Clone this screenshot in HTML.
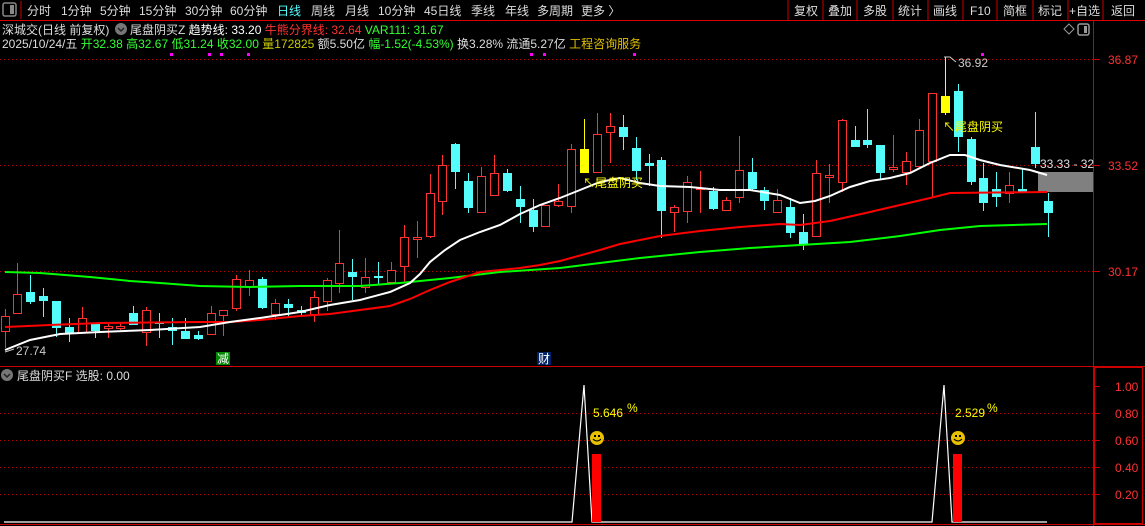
<!DOCTYPE html>
<html><head><meta charset="utf-8"><style>
html,body{margin:0;padding:0;background:#000;width:1145px;height:526px;overflow:hidden}
svg{display:block}
text{font-family:"Liberation Sans","Noto Sans CJK SC",sans-serif;font-size:12px}
</style></head><body>
<svg id="s" width="1145" height="526" xmlns="http://www.w3.org/2000/svg">
<rect width="1145" height="526" fill="#000"/>
<!-- toolbar -->
<rect x="3" y="3" width="13" height="13" fill="none" stroke="#888" stroke-width="1.5" rx="2"/>
<rect x="10" y="5" width="4" height="9" fill="#888"/>
<line x1="21" y1="1" x2="21" y2="19" stroke="#c00"/>
<g fill="#ddd">
<text x="27" y="15">分时</text><text x="61" y="15">1分钟</text><text x="100" y="15">5分钟</text>
<text x="139" y="15">15分钟</text><text x="185" y="15">30分钟</text><text x="230" y="15">60分钟</text>
<text x="277" y="15" fill="#54fcfc">日线</text><text x="311" y="15">周线</text><text x="345" y="15">月线</text>
<text x="378" y="15">10分钟</text><text x="424" y="15">45日线</text><text x="471" y="15">季线</text>
<text x="505" y="15">年线</text><text x="537" y="15">多周期</text><text x="581" y="15">更多 〉</text>
<text x="794" y="15">复权</text><text x="828" y="15">叠加</text><text x="863" y="15">多股</text><text x="898" y="15">统计</text>
<text x="933" y="15">画线</text><text x="970" y="15">F10</text><text x="1003" y="15">简框</text><text x="1038" y="15">标记</text>
<text x="1069" y="15">+自选</text><text x="1111" y="15">返回</text>
</g>
<g stroke="#c00"><line x1="788" y1="0" x2="788" y2="20"/><line x1="823" y1="0" x2="823" y2="20"/><line x1="857" y1="0" x2="857" y2="20"/><line x1="893" y1="0" x2="893" y2="20"/><line x1="928" y1="0" x2="928" y2="20"/><line x1="963" y1="0" x2="963" y2="20"/><line x1="997" y1="0" x2="997" y2="20"/><line x1="1033" y1="0" x2="1033" y2="20"/><line x1="1068" y1="0" x2="1068" y2="20"/><line x1="1103" y1="0" x2="1103" y2="20"/></g>
<line x1="0" y1="20.5" x2="1145" y2="20.5" stroke="#d00"/>
<!-- header rows -->
<text x="2" y="34" fill="#ddd">深城交(日线 前复权)</text>
<circle cx="121" cy="29" r="6" fill="#777"/><path d="M118 28l3 3 3-3" stroke="#222" fill="none" stroke-width="1.5"/>
<text x="130" y="34" fill="#ddd">尾盘阴买Z <tspan fill="#fff">趋势线: 33.20</tspan> <tspan fill="#ff3232">牛熊分界线: 32.64</tspan> <tspan fill="#32ff32">VAR111: 31.67</tspan></text>
<text x="2" y="48" fill="#ddd">2025/10/24/五 <tspan fill="#32ff32">开32.38</tspan> <tspan fill="#32ff32">高32.67</tspan> <tspan fill="#32ff32">低31.24</tspan> <tspan fill="#32ff32">收32.00</tspan> <tspan fill="#c8c800">量172825</tspan> 额5.50亿 <tspan fill="#32ff32">幅-1.52(-4.53%)</tspan> 换3.28% 流通5.27亿 <tspan fill="#e0c000">工程咨询服务</tspan></text>
<path d="M1064 29l5-5 5 5-5 5z" fill="none" stroke="#999"/>
<rect x="1078" y="24" width="11" height="11" fill="none" stroke="#999" stroke-width="1.5" rx="2"/><rect x="1084" y="26" width="3" height="7" fill="#999"/>
<!-- grid -->
<g stroke="#b00" stroke-dasharray="1,3">
<line x1="0" y1="59.5" x2="1093" y2="59.5"/><line x1="0" y1="165.5" x2="1093" y2="165.5"/><line x1="0" y1="271.5" x2="1093" y2="271.5"/>
<line x1="0" y1="413.5" x2="1093" y2="413.5"/><line x1="0" y1="440.5" x2="1093" y2="440.5"/><line x1="0" y1="467.5" x2="1093" y2="467.5"/><line x1="0" y1="494.5" x2="1093" y2="494.5"/>
</g>
<line x1="1093.5" y1="20" x2="1093.5" y2="526" stroke="#c00"/>
<line x1="0" y1="366.5" x2="1145" y2="366.5" stroke="#c00"/>
<rect x="1094.5" y="367.5" width="48" height="156" fill="none" stroke="#c00"/>
<line x1="0" y1="524.5" x2="1145" y2="524.5" stroke="#c00"/>
<g stroke="#c00"><line x1="1094" y1="59.5" x2="1100" y2="59.5"/><line x1="1094" y1="165.5" x2="1100" y2="165.5"/><line x1="1094" y1="271.5" x2="1100" y2="271.5"/>
<line x1="1094" y1="386.5" x2="1100" y2="386.5"/><line x1="1094" y1="413.5" x2="1100" y2="413.5"/><line x1="1094" y1="440.5" x2="1100" y2="440.5"/><line x1="1094" y1="467.5" x2="1100" y2="467.5"/><line x1="1094" y1="494.5" x2="1100" y2="494.5"/></g>
<g fill="#ff3232"><text x="1108" y="64">36.87</text><text x="1108" y="170">33.52</text><text x="1108" y="276">30.17</text>
<text x="1115" y="391">1.00</text><text x="1115" y="418">0.80</text><text x="1115" y="445">0.60</text><text x="1115" y="472">0.40</text><text x="1115" y="499">0.20</text></g>
<g fill="#f0f"><rect x="170" y="53" width="3" height="3"/><rect x="208" y="53" width="3" height="3"/><rect x="220" y="53" width="3" height="3"/><rect x="247" y="53" width="3" height="3"/><rect x="530" y="53" width="3" height="3"/><rect x="543" y="53" width="3" height="3"/><rect x="633" y="53" width="3" height="3"/><rect x="981" y="53" width="3" height="3"/></g>
<rect x="1038" y="172" width="55" height="20" fill="#808080"/>
<g id="c"></g>
<polyline fill="none" stroke="#00ff00" stroke-width="2" points="5,272 40,273 90,277 130,281 160,283 200,286 250,287 300,286 360,286 400,283 450,278 500,272 560,268 600,263 640,258 700,252 750,248 800,245 850,242 900,236 940,230 980,226 1047,224"/>
<polyline fill="none" stroke="#ff0000" stroke-width="2" points="5,327 50,325 100,323 200,322 230,322 260,320 300,316 330,314 360,310 390,306 410,299 430,290 450,282 480,272 520,268 540,265 560,261 600,250 620,244 660,236 700,231 740,227 780,224 800,225 830,221 870,212 900,205 930,198 950,193 1047,192"/>
<polyline fill="none" stroke="#fff" stroke-width="2" points="5,350 30,340 60,334 100,332 150,330 200,327 230,322 260,318 300,312 330,305 360,300 390,292 410,283 420,274 430,262 445,250 460,240 480,232 500,225 520,214 540,205 560,198 580,190 600,182 620,178 640,183 660,186 690,187 720,190 750,190 780,195 800,203 815,201 830,196 850,187 870,181 890,178 910,173 930,163 950,155 965,155 980,160 1000,165 1030,170 1047,175"/>
<text x="1040" y="168" fill="#ddd">33.33 - 32</text>
<text x="16" y="355" fill="#ccc">27.74</text><path d="M5 352l9-3" stroke="#ccc"/>
<text x="958" y="67" fill="#ccc">36.92</text><path d="M944 57h6l6 5" stroke="#ccc" fill="none"/>
<text x="583" y="187" fill="#ffff00">↖尾盘阴买</text>
<text x="943" y="131" fill="#ffff00">↖尾盘阴买</text>
<rect x="216" y="352" width="14" height="13" fill="#080"/><text x="217" y="363" fill="#fff">减</text>
<rect x="537" y="352" width="14" height="13" fill="#026"/><text x="538" y="363" fill="#fff">财</text>
<!-- sub panel -->
<circle cx="7" cy="375" r="6" fill="#777"/><path d="M4 374l3 3 3-3" stroke="#222" fill="none" stroke-width="1.5"/>
<text x="17" y="380" fill="#ddd">尾盘阴买F 选股: 0.00</text>
<polyline fill="none" stroke="#fff" stroke-width="1.2" points="4,522 572,522 584,385 592,522 932,522 944,385 952,522 1047,522"/>
<rect x="592" y="454" width="9" height="68" fill="#f00"/><rect x="953" y="454" width="9" height="68" fill="#f00"/>
<g fill="#ffff00"><text x="593" y="417">5.646</text><text x="627" y="412">%</text><text x="955" y="417">2.529</text><text x="987" y="412">%</text></g>
<g><circle cx="597" cy="438" r="7" fill="#e8c000"/><circle cx="958" cy="438" r="7" fill="#e8c000"/>
<path d="M593 439q4 4 8 0M954 439q4 4 8 0" stroke="#000" fill="none"/><g fill="#000"><rect x="594" y="435" width="2" height="2"/><rect x="598" y="435" width="2" height="2"/><rect x="955" y="435" width="2" height="2"/><rect x="959" y="435" width="2" height="2"/></g></g>
</svg>
<script>
var d=[[0,'r',316,332,309,348],[1,'r',294,314,263,314],[2,'c',292,302,275,304],[3,'c',296,301,288,317],[4,'c',301,328,301,337],[5,'c',327,333,318,342],[6,'r',318,333,307,333],[7,'c',323,331,323,338],[8,'r',326,329,324,338],[9,'r',326,329,322,330],[10,'c',313,325,306,325],[11,'r',310,333,307,346],[12,'c',322,323,313,338],[13,'c',327,331,318,345],[14,'c',331,339,318,339],[15,'c',335,339,331,340],[16,'r',313,335,306,335],[17,'r',310,316,310,336],[18,'r',279,309,275,311],[19,'r',280,287,270,296],[20,'c',279,308,277,309],[21,'r',303,315,299,320],[22,'c',304,308,299,316],[23,'c',310,313,306,316],[24,'r',297,315,291,322],[25,'r',280,302,278,311],[26,'r',263,284,230,293],[27,'c',272,277,259,300],[28,'r',277,288,258,293],[29,'c',276,277,262,285],[30,'r',270,283,262,284],[31,'r',237,267,225,283],[32,'r',237,240,221,258],[33,'r',193,237,174,238],[34,'r',165,202,155,215],[35,'c',144,172,143,189],[36,'c',181,208,173,213],[37,'r',176,213,167,213],[38,'r',173,196,155,196],[39,'c',173,191,169,192],[40,'c',199,207,186,223],[41,'c',210,227,199,232],[42,'r',205,227,205,227],[43,'r',201,206,184,207],[44,'r',149,207,144,213],[45,'y',149,173,119,173],[46,'r',134,173,113,173],[47,'r',126,133,113,163],[48,'c',127,137,115,150],[49,'c',148,171,137,180],[50,'c',163,166,154,186],[51,'c',160,211,157,238],[52,'r',207,213,205,232],[53,'r',182,212,176,223],[54,'r',188,189,171,213],[55,'c',191,209,187,210],[56,'r',200,211,197,211],[57,'r',170,198,136,203],[58,'c',172,189,158,190],[59,'c',190,201,187,210],[60,'r',200,213,189,213],[61,'c',207,233,198,238],[62,'c',232,245,214,250],[63,'r',173,237,160,237],[64,'r',175,178,164,203],[65,'r',120,183,119,192],[66,'c',140,147,126,147],[67,'c',140,145,109,148],[68,'c',145,173,145,180],[69,'r',167,170,135,172],[70,'r',161,173,152,185],[71,'r',130,167,119,167],[72,'r',93,162,93,198],[73,'y',96,113,57,115],[74,'c',91,137,84,152],[75,'c',139,182,137,185],[76,'c',178,203,163,211],[77,'c',189,197,172,207],[78,'r',185,194,172,203],[79,'c',189,192,168,192],[80,'c',147,164,112,168],[81,'c',201,213,193,237]];
var s='';
d.forEach(function(a){var x=Math.round(4.5+12.88*a[0]);var t=a[2],b=a[3];if(b-t<2)b=t+2;
var col=a[1]=='r'?'#ff3232':a[1]=='c'?'#54fcfc':'#ffff00';
s+='<line x1="'+(x+0.5)+'" y1="'+a[4]+'" x2="'+(x+0.5)+'" y2="'+a[5]+'" stroke="'+col+'"/>';
if(a[1]=='r')s+='<rect x="'+(x-3.5)+'" y="'+(t+0.5)+'" width="8" height="'+(b-t-1)+'" fill="#000" stroke="'+col+'"/>';
else s+='<rect x="'+(x-4)+'" y="'+t+'" width="9" height="'+(b-t)+'" fill="'+col+'"/>';});
document.getElementById('c').innerHTML=s;
</script>
</body></html>
